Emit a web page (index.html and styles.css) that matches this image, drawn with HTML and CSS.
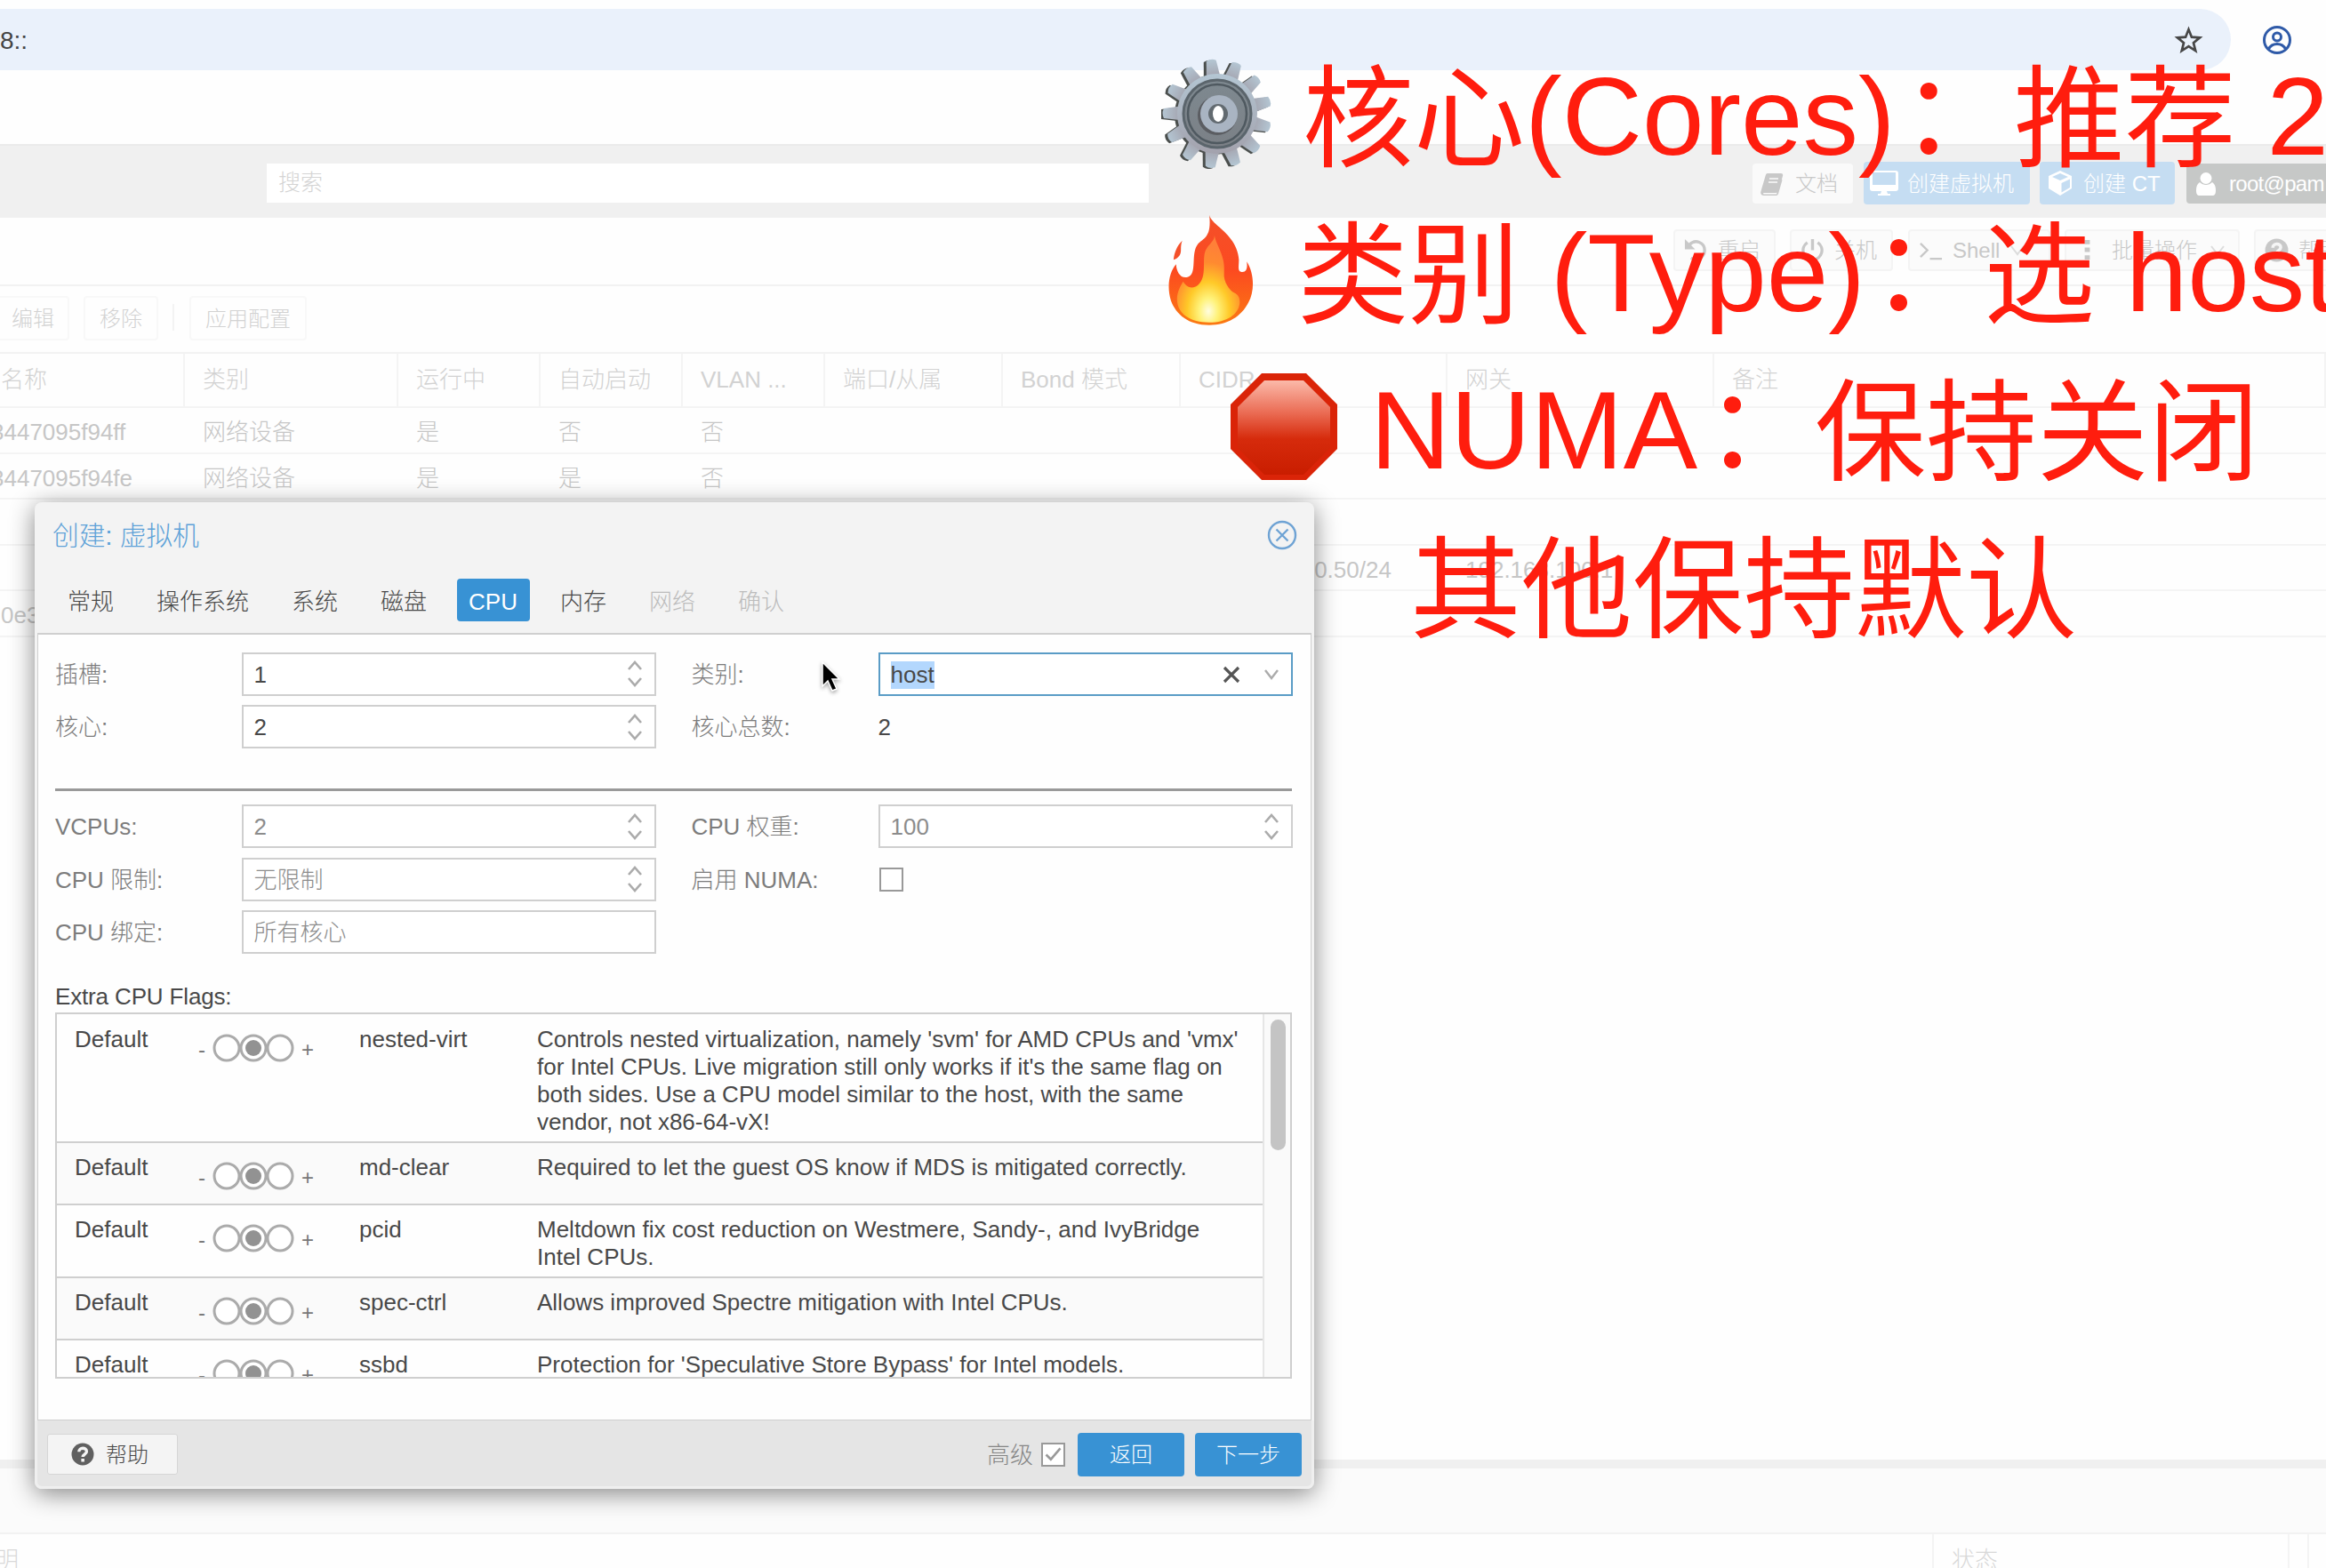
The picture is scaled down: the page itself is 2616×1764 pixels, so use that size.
FILE: index.html
```html
<!DOCTYPE html>
<html lang="zh-CN">
<head>
  <meta charset="UTF-8">
  <title>创建: 虚拟机</title>
  <link rel="stylesheet" href="styles.css">
</head>
<body>

  <!-- shared icons -->
  <svg class="defs">
    <symbol id="spin" viewBox="0 0 18 32"><path d="M2 11l7-8 7 8M2 21l7 8 7-8"/></symbol>
    <symbol id="down" viewBox="0 0 18 14"><path d="M2 2l7 9 7-9"/></symbol>
    <symbol id="help" viewBox="0 0 26 26">
      <circle cx="13" cy="13" r="12.5" fill="currentColor"/>
      <path d="M8.8 10.3c0-5.4 8.6-5.3 8.6-.4 0 3.3-4.3 3.1-4.3 6.2" fill="none" stroke="#f5f5f5" stroke-width="3.4"/>
      <rect x="11.4" y="18" width="3.5" height="3.5" fill="#f5f5f5"/>
    </symbol>
    <symbol id="tri" viewBox="0 0 92 32">
      <circle cx="16" cy="16" r="14"/><circle cx="46" cy="16" r="14"/><circle cx="76" cy="16" r="14"/>
      <circle class="dot" cx="46" cy="16" r="9"/>
    </symbol>
  </svg>

  <div class="page">
    <div class="browser">
      <div class="address">
        <span>8::</span>
        <svg class="star" viewBox="0 0 32 32"><path d="M16 4l3.3 8.3 8.9.6-6.9 5.7 2.2 8.7-7.5-4.8-7.5 4.8 2.2-8.7-6.9-5.7 8.9-.6z"/></svg>
      </div>
      <svg class="profile" viewBox="0 0 34 34"><circle cx="17" cy="17" r="14.5"/><circle cx="17" cy="13.5" r="4.5"/><path d="M7.5 27c4-7.5 15-7.5 19 0"/></svg>
    </div>

    <div class="header">
      <div class="search">搜索</div>
      <div class="header-buttons">
        <div class="btn docs">
          <svg viewBox="0 0 26 26"><path fill="currentColor" d="M8 1h15c2 0 2.500 1.500 2 3l-4.500 16c-.5 2-1.500 3-3.500 3H4c-1.500 0-1.500 1.500 0 1.500h14l5-17 1.500 1L20 24c-.5 1.500-1.500 2-3 2H4c-3 0-4.500-2-3.500-5L5.500 4C6 2 6.500 1 8 1z"/><path stroke="#fafafa" stroke-width="1.600" d="M10 7h10M9 11h10"/></svg>
          文档
        </div>
        <div class="btn blue vm">
          <svg viewBox="0 0 32 28"><path fill="#fff" fill-rule="evenodd" d="M3 0h26c2 0 3 1 3 3v17c0 2-1 3-3 3H19l1 3h3v2H9v-2h3l1-3H3c-2 0-3-1-3-3V3c0-2 1-3 3-3zm0 2v14h26V2z"/></svg>
          创建虚拟机
        </div>
        <div class="btn blue ct">
          <svg viewBox="0 0 28 28"><path fill="#fff" fill-rule="evenodd" d="M14 0l13 6v14L14 28 1 20V6zM14 3L5 7l9 4 9-4zM15.500 14v10.500L25 19V9.500z"/></svg>
          <span>创建 CT</span>
        </div>
        <div class="btn dark">
          <svg viewBox="0 0 22 26"><circle cx="11" cy="6.500" r="6.500" fill="#fff"/><path fill="#fff" d="M4 11c4 4 10 4 14 0 3 2 4 5 4 9 0 4-1 6-4 6H4c-3 0-4-2-4-6 0-4 1-7 4-9z"/></svg>
          root@pam
        </div>
      </div>
    </div>

    <div class="node-bar">
      <div class="btn restart">
        <svg viewBox="0 0 28 28"><path fill="none" stroke="currentColor" stroke-width="3.500" d="M6 8c7-8 18-3 18 6 0 8-8 13-16 9"/><path fill="currentColor" d="M1 1v12h12z"/></svg>
        重启
      </div>
      <div class="btn power">
        <svg viewBox="0 0 28 28"><path fill="none" stroke="currentColor" stroke-width="3.500" d="M8 5c-9 6-5 20 6 20s15-14 6-20M14 1v13"/></svg>
        关机
      </div>
      <div class="btn shell">
        <svg viewBox="0 0 28 28"><path fill="none" stroke="currentColor" stroke-width="2.500" d="M2 6l8 8-8 8M13 24h14"/></svg>
        Shell
        <svg class="caret"><use href="#down"/></svg>
      </div>
      <div class="btn bulk">
        <svg viewBox="0 0 28 28"><path fill="currentColor" d="M11 2h6v5h-6zM11 11h6v5h-6zM11 20h6v5h-6z"/></svg>
        批量操作
        <svg class="caret"><use href="#down"/></svg>
      </div>
      <div class="btn node-help">
        <svg><use href="#help"/></svg>
        帮助
      </div>
    </div>

    <div class="net-bar">
      <div class="btn edit">编辑</div>
      <div class="btn remove">移除</div>
      <div class="sep"></div>
      <div class="btn apply">应用配置</div>
    </div>

    <div class="net-table">
      <div class="net-row net-head">
        <span>名称</span><span>类别</span><span>运行中</span><span>自动启动</span><span>VLAN ...</span><span>端口/从属</span><span>Bond 模式</span><span>CIDR</span><span>网关</span><span>备注</span>
      </div>
      <div class="net-row"><span class="cut">3447095f94ff</span><span>网络设备</span><span>是</span><span>否</span><span>否</span></div>
      <div class="net-row"><span class="cut">3447095f94fe</span><span>网络设备</span><span>是</span><span>是</span><span>否</span></div>
      <div class="net-row"></div>
      <div class="net-row"><span></span><span></span><span></span><span></span><span></span><span></span><span></span><span>192.168.100.50/24</span><span>192.168.100.1</span></div>
      <div class="net-row"><span>0e3</span></div>
    </div>

    <div class="splitter"></div>
    <div class="log-tabs"></div>
    <div class="log-head">
      <span class="desc">明</span>
      <span class="status">状态</span>
      <span></span>
    </div>
  </div>

  <div class="dialog">
    <div class="dialog-title">
      <span>创建: 虚拟机</span>
      <svg viewBox="0 0 34 34"><circle cx="17" cy="17" r="15"/><path d="M10.500 10.500l13 13M23.500 10.500l-13 13"/></svg>
    </div>
    <div class="tabs">
      <span>常规</span>
      <span>操作系统</span>
      <span>系统</span>
      <span>磁盘</span>
      <span class="active">CPU</span>
      <span>内存</span>
      <span class="off">网络</span>
      <span class="off">确认</span>
    </div>

    <div class="dialog-body">
      <div class="form">
        <label>插槽:</label>
        <div class="field">1<svg class="spin"><use href="#spin"/></svg></div>
        <label class="right">类别:</label>
        <div class="field focus"><mark>host</mark>
          <svg class="clear" viewBox="0 0 20 20"><path d="M2 2l16 16M18 2L2 18"/></svg>
          <svg class="caret"><use href="#down"/></svg>
        </div>

        <label>核心:</label>
        <div class="field">2<svg class="spin"><use href="#spin"/></svg></div>
        <label class="right">核心总数:</label>
        <div class="plain">2</div>
      </div>

      <div class="rule"></div>

      <div class="form">
        <label>VCPUs:</label>
        <div class="field empty">2<svg class="spin"><use href="#spin"/></svg></div>
        <label class="right">CPU 权重:</label>
        <div class="field empty">100<svg class="spin"><use href="#spin"/></svg></div>

        <label>CPU 限制:</label>
        <div class="field empty">无限制<svg class="spin"><use href="#spin"/></svg></div>
        <label class="right">启用 NUMA:</label>
        <div class="plain"><div class="check"></div></div>

        <label>CPU 绑定:</label>
        <div class="field empty">所有核心</div>
      </div>

      <div class="flags-label">Extra CPU Flags:</div>
      <div class="flags">
        <div class="flag-list">
          <div class="flag tall">
            <span>Default</span>
            <span class="tri"><i>-</i><svg><use href="#tri"/></svg><i>+</i></span>
            <span>nested-virt</span>
            <span>Controls nested virtualization, namely 'svm' for AMD CPUs and 'vmx' for Intel CPUs. Live migration still only works if it's the same flag on both sides. Use a CPU model similar to the host, with the same vendor, not x86-64-vX!</span>
          </div>
          <div class="flag">
            <span>Default</span>
            <span class="tri"><i>-</i><svg><use href="#tri"/></svg><i>+</i></span>
            <span>md-clear</span>
            <span>Required to let the guest OS know if MDS is mitigated correctly.</span>
          </div>
          <div class="flag two">
            <span>Default</span>
            <span class="tri"><i>-</i><svg><use href="#tri"/></svg><i>+</i></span>
            <span>pcid</span>
            <span>Meltdown fix cost reduction on Westmere, Sandy-, and IvyBridge Intel CPUs.</span>
          </div>
          <div class="flag">
            <span>Default</span>
            <span class="tri"><i>-</i><svg><use href="#tri"/></svg><i>+</i></span>
            <span>spec-ctrl</span>
            <span>Allows improved Spectre mitigation with Intel CPUs.</span>
          </div>
          <div class="flag">
            <span>Default</span>
            <span class="tri"><i>-</i><svg><use href="#tri"/></svg><i>+</i></span>
            <span>ssbd</span>
            <span>Protection for 'Speculative Store Bypass' for Intel models.</span>
          </div>
        </div>
        <div class="scroll"><div class="thumb"></div></div>
      </div>
    </div>

    <div class="dialog-foot">
      <div class="help-btn"><svg><use href="#help"/></svg>帮助</div>
      <span class="adv">高级</span>
      <div class="check"><svg viewBox="0 0 26 26"><path d="M4 13l6 6L22 5"/></svg></div>
      <div class="primary">返回</div>
      <div class="primary">下一步</div>
    </div>
  </div>

  <svg class="cursor" viewBox="0 0 24 36"><path d="M2 1v27l6-6 5 11 5-2-5-11h8z"/></svg>

  <!-- captions on top of the recording -->
  <div class="caption c1">
    <svg viewBox="-62 -62 124 124">
      <defs>
        <linearGradient id="steel" x1="0" y1="0" x2="0" y2="1"><stop offset="0" stop-color="#b4c6d3"/><stop offset="1" stop-color="#a3a2ad"/></linearGradient>
        <linearGradient id="disc" x1="0" y1="0" x2="0" y2="1"><stop offset="0" stop-color="#7e8990"/><stop offset="1" stop-color="#7b8086"/></linearGradient>
        <path id="tooth" d="M-8-40l2-20q6-3 11 0l3 20z"/>
        <g id="teeth">
          <use href="#tooth" transform="rotate(-6)"/><use href="#tooth" transform="rotate(21.700)"/><use href="#tooth" transform="rotate(49.400)"/>
          <use href="#tooth" transform="rotate(77.100)"/><use href="#tooth" transform="rotate(104.800)"/><use href="#tooth" transform="rotate(132.500)"/>
          <use href="#tooth" transform="rotate(160.200)"/><use href="#tooth" transform="rotate(187.900)"/><use href="#tooth" transform="rotate(215.600)"/>
          <use href="#tooth" transform="rotate(243.300)"/><use href="#tooth" transform="rotate(271)"/><use href="#tooth" transform="rotate(298.700)"/>
          <use href="#tooth" transform="rotate(326.400)"/><circle r="45"/>
        </g>
      </defs>
      <use href="#teeth" fill="#4b4f4d" transform="translate(-2 1)"/>
      <use href="#teeth" fill="url(#steel)" transform="translate(1 0)"/>
      <circle cx="1" r="38" fill="url(#disc)" stroke="#5b656c" stroke-width="3"/>
      <circle cx="1" r="33" fill="none" stroke="#4f5960" stroke-width="2.500"/>
      <circle cx="1" cy="2" r="22" fill="#5b5d62"/>
      <circle cx="3" r="21" fill="#a9b4c2"/>
      <circle cx="2" r="11" fill="#626a70"/>
      <ellipse cx="2" rx="6" ry="9" fill="#fff"/>
    </svg>
    <span>核心<span class="latin">(Cores)</span></span><span class="colon">：</span><span>推荐 <span class="latin">2</span></span>
  </div>
  <div class="caption c2">
    <svg viewBox="0 0 100 128">
      <defs>
        <linearGradient id="fire" x1="0" y1="0" x2="0" y2="1"><stop offset="0" stop-color="#f4502a"/><stop offset=".5" stop-color="#fc4a20"/><stop offset="1" stop-color="#fb7a12"/></linearGradient>
        <radialGradient id="glow" cx=".5" cy=".87" r=".75"><stop offset="0" stop-color="#fffde0"/><stop offset=".2" stop-color="#fff27a"/><stop offset=".45" stop-color="#ffc928"/><stop offset=".75" stop-color="#ff8a30"/><stop offset="1" stop-color="#ff8038"/></radialGradient>
      </defs>
      <path fill="url(#fire)" d="M48 0c1 12 32 22 34 52 0 8-2 14 4 14 5 0 6-5 5-12 9 14 9 34 2 47-8 16-24 26-45 26-24 0-38-12-44-28C-1 82 2 66 10 57c0 8 5 17 13 15 12-3 3-27 12-38 6-7 16-7 13-34z"/>
      <path fill="#f4502a" d="M17 30c-3 8 0 12-3 17-2 3-4 4-7 5 1-9 4-16 10-22z"/>
      <path fill="url(#glow)" d="M54 24c2 12 13 24 11 43-1 10 6 20 12 23 4 2 6 5 6 11-1 14-15 23-35 23-22 0-37-10-37-27 0-8 4-15 7-20 4 7 11 9 17 4 12-10 3-32 10-42 4-6 9-9 9-15z"/>
    </svg>
    <span>类别 <span class="latin">(Type)</span></span><span class="colon">：</span><span>选 <span class="latin">host</span></span>
  </div>
  <div class="caption c3">
    <svg viewBox="0 0 120 120">
      <defs><linearGradient id="stop" x1="0" y1="0" x2="0" y2="1"><stop offset="0" stop-color="#fbb9a9"/><stop offset=".35" stop-color="#ea6a52"/><stop offset=".62" stop-color="#d62b0c"/><stop offset="1" stop-color="#c91d00"/></linearGradient></defs>
      <path fill="#da2408" d="M35 0h50l35 35v50l-35 35H35L0 85V35z"/>
      <path fill="url(#stop)" d="M38 8h44l30 30v46l-30 30H38L8 84V38z"/>
    </svg>
    <span><span class="latin">NUMA</span></span><span class="colon">：</span><span>保持关闭</span>
  </div>
  <div class="caption c4"><span>其他保持默认</span></div>

</body>
</html>
```

FILE: styles.css
```css
* {
  box-sizing: border-box;
}

body {
  margin: 0;
  position: relative;
  width: 2616px;
  height: 1764px;
  overflow: hidden;
  background: #fefefe;
  font-family: "Liberation Sans", "Noto Sans CJK SC", sans-serif;
  font-weight: 300;
  font-size: 26px;
  line-height: 31px;
  color: #484848;
}

.defs {
  display: none;
}

svg {
  flex: none;
  display: block;
}

/* faded page behind the dialog */

.page {
  display: flex;
  flex-direction: column;
  height: 1764px;
}

.browser {
  display: flex;
  height: 162px;
  padding-top: 10px;
}

.address {
  display: flex;
  justify-content: space-between;
  align-items: center;
  width: 2509px;
  height: 69px;
  padding: 2px 31px 0 0;
  background: #eaf1fb;
  border-radius: 0 35px 35px 0;
  font-size: 28px;
  color: #444;
}

.star {
  width: 33px;
  height: 33px;
  fill: none;
  stroke: #474747;
  stroke-width: 2.6;
}

.profile {
  width: 34px;
  height: 34px;
  margin: 18px 0 0 35px;
  fill: none;
  stroke: #2f5aa8;
  stroke-width: 3;
}

.header {
  display: flex;
  height: 83px;
  background: #f0f0f0;
  border-top: 2px solid #ebebeb;
}

.search {
  flex: none;
  width: 992px;
  height: 44px;
  margin: 20px 0 0 300px;
  padding: 6px 13px;
  background: #fff;
  font-size: 25px;
  color: #d4d4d4;
}

.header-buttons {
  display: flex;
  flex: none;
  margin: 17px 0 0 679px;
  white-space: nowrap;
}

.btn {
  display: flex;
  align-items: center;
  flex: none;
  font-size: 24px;
  color: #c8c8c8;
  border-radius: 4px;
  white-space: nowrap;
}

.docs {
  width: 113px;
  height: 45px;
  margin: 3px 12px 0 0;
  padding-left: 9px;
  gap: 13px;
  background: #fafafa;
}

.docs svg {
  width: 26px;
  height: 26px;
}

.blue {
  height: 48px;
  margin-top: 1px;
  background: #c5ddf2;
  color: #fff;
}

.vm {
  width: 187px;
  padding-left: 7px;
  gap: 10px;
  margin-right: 11px;
}

.vm svg {
  width: 32px;
  height: 28px;
}

.ct {
  width: 152px;
  padding-left: 9px;
  gap: 12px;
  margin-right: 13px;
}

.ct svg {
  width: 28px;
  height: 28px;
}

.dark {
  width: 170px;
  height: 45px;
  margin-top: 3px;
  padding-left: 11px;
  gap: 15px;
  background: #c6c8c7;
  color: #fff;
  letter-spacing: -0.7px;
}

.dark svg {
  width: 22px;
  height: 26px;
}

.node-bar {
  display: flex;
  height: 77px;
  padding: 13px 0 0 1882px;
  border-bottom: 2px solid #f2f2f2;
}

.node-bar .btn {
  height: 47px;
  padding-left: 10px;
  gap: 11px;
  background: #fbfbfb;
  border: 2px solid #f4f4f4;
}

.node-bar svg {
  width: 27px;
  height: 27px;
}

.node-bar .caret {
  width: 18px;
  height: 14px;
  fill: none;
  stroke: #dcdcdc;
  stroke-width: 2;
}

.restart { width: 115px; margin-right: 16px; }
.power { width: 116px; margin-right: 17px; }
.shell { width: 160px; margin-right: 16px; }
.node-bar .bulk { width: 197px; margin-right: 16px; gap: 14px; }
.node-help { width: 120px; }

.net-bar {
  display: flex;
  height: 74px;
  padding-top: 11px;
}

.net-bar .btn {
  justify-content: center;
  height: 50px;
  border: 2px solid #f8f8f8;
  color: #d2d2d2;
}

.edit { width: 82px; margin-left: -4px; }
.remove { width: 84px; margin-left: 16px; }
.apply { width: 132px; margin-left: 17px; }

.sep {
  width: 2px;
  height: 30px;
  margin: 9px 0 0 16px;
  background: #f3f3f3;
}

.net-table {
  flex: 1;
}

.net-row {
  display: grid;
  grid-template-columns: 208px 240px 160px 160px 160px 200px 200px 300px 300px 1fr;
  height: 51.6px;
  border-bottom: 2px solid #f4f4f4;
  color: #c6c6c6;
}

.net-row span {
  padding: 12px 0 0 20px;
  white-space: nowrap;
}

.net-row span:first-child {
  padding-left: 1px;
}

.net-row .cut {
  margin-left: -11px;
}

.net-head {
  height: 63px;
  border-top: 2px solid #f2f2f2;
  color: #d2d2d2;
}

.net-head span {
  padding-top: 14px;
  border-right: 2px solid #f4f4f4;
}

.splitter {
  height: 10px;
  background: #f0f0f0;
}

.log-tabs {
  height: 74px;
  background: #fbfbfb;
  border-bottom: 2px solid #f2f2f2;
}

.log-head {
  display: flex;
  height: 38px;
  overflow: hidden;
  color: #d8d8d8;
}

.log-head span {
  padding: 14px 0 0 20px;
  border-right: 2px solid #f4f4f4;
}

.log-head .desc {
  width: 2175px;
  padding-left: 0;
  text-indent: -5px;
}

.log-head .status {
  width: 400px;
}

/* dialog */

.dialog {
  position: absolute;
  left: 39px;
  top: 565px;
  width: 1439px;
  height: 1110px;
  padding: 0 3px;
  border-radius: 8px;
  background: #f3f3f3;
  box-shadow: 0 5px 28px rgba(0, 0, 0, 0.48);
}

.dialog-title {
  display: flex;
  justify-content: space-between;
  align-items: center;
  height: 72px;
  padding: 2px 16px 0 17px;
  font-size: 29.7px;
  color: #5ea2d8;
}

.dialog-title svg {
  width: 34px;
  height: 34px;
  fill: none;
  stroke: #6fa3d4;
  stroke-width: 2.4;
}

.tabs {
  display: flex;
  gap: 20px;
  height: 75px;
  padding: 14px 0 0 20px;
}

.tabs span {
  height: 48px;
  padding: 11px 14px 7px;
  border-radius: 4px;
}

.tabs .active {
  width: 82px;
  padding: 11px 13px 7px;
  background: #3892d4;
  color: #fff;
}

.tabs .off {
  color: #bcbcbc;
}

.dialog-body {
  height: 886px;
  padding: 19px 21px 0 19px;
  background: #fefefe;
  border: 1px solid #cfcfcf;
  border-top-width: 2px;
}

.form {
  display: grid;
  grid-template-columns: 209.500px 466px 250px 466px;
  grid-auto-rows: 50px;
  row-gap: 9.500px;
  align-items: center;
}

label {
  padding-top: 2px;
  color: #7c7c7c;
}

label.right {
  padding-left: 40px;
}

.field {
  display: flex;
  align-items: center;
  height: 49px;
  padding: 2px 13px 0 12px;
  border: 2px solid #cfcfcf;
  background: #fff;
}

.field.empty {
  color: #8c8c8c;
}

.field.focus {
  border-color: #5a9cc6;
}

.plain {
  padding-top: 2px;
}

.spin {
  width: 18px;
  height: 32px;
  margin: -2px 0 0 auto;
  fill: none;
  stroke: #ababab;
  stroke-width: 2.6;
}

.clear {
  width: 20px;
  height: 20px;
  margin: 0 26px 0 auto;
  stroke: #555;
  stroke-width: 3.2;
}

.field .caret {
  width: 18px;
  height: 14px;
  fill: none;
  stroke: #ababab;
  stroke-width: 2.4;
}

mark {
  background: #b3d7fd;
  color: #484848;
}

.check {
  width: 27px;
  height: 27px;
  border: 2px solid #999;
  background: #fff;
}

.plain .check {
  margin: -2px 0 0 1px;
}

.rule {
  height: 3px;
  margin: 44px 0 15px;
  background: #999;
}

.flags-label {
  margin-top: 32px;
  letter-spacing: -0.15px;
}

.flags {
  display: flex;
  height: 412px;
  margin-top: 2px;
  border: 2px solid #cfcfcf;
  overflow: hidden;
}

.flag-list {
  flex: 1;
}

.flag {
  display: grid;
  grid-template-columns: 139px 181px 200px 800px;
  height: 70px;
  padding: 12px 0 0 20px;
  border-bottom: 2px solid #cfcfcf;
}

.flag:nth-child(even) {
  background: #fafafa;
}

.flag.tall {
  height: 145px;
  padding-top: 13px;
}

.flag.two {
  height: 82px;
}

.tri {
  display: flex;
  align-items: center;
  height: 32px;
  margin-top: 9px;
  gap: 8px;
}

.tri svg {
  width: 92px;
  height: 32px;
  fill: #fff;
  stroke: #ababab;
  stroke-width: 3;
}

.tri i {
  padding-top: 4px;
  font-style: normal;
  font-size: 24px;
  color: #777;
}

.dot {
  fill: #929292;
  stroke: none;
}

.scroll {
  width: 31px;
  padding: 6px 0 0 7px;
  background: #fafafa;
  border-left: 2px solid #e6e6e6;
}

.thumb {
  width: 17px;
  height: 147px;
  border-radius: 9px;
  background: #c4c4c4;
}

.dialog-foot {
  display: flex;
  align-items: center;
  height: 77px;
  margin: 0 -3px;
  padding: 2px 14px 0 15px;
  border: solid #efefef;
  border-width: 0 3px 3px;
  border-radius: 0 0 8px 8px;
  background: #e5e5e5;
}

.help-btn {
  display: flex;
  align-items: center;
  gap: 13px;
  width: 147px;
  height: 46px;
  margin-left: -4px;
  padding-left: 26px;
  border: 1px solid #d6d6d6;
  border-radius: 3px;
  background: #f4f4f4;
  font-size: 24px;
}

.help-btn svg {
  width: 26px;
  height: 26px;
  color: #606060;
}

.adv {
  margin: 2px 9px 0 auto;
  color: #858585;
}

.dialog-foot .check svg {
  width: 23px;
  height: 23px;
  fill: none;
  stroke: #999;
  stroke-width: 3;
}

.primary {
  width: 120px;
  height: 49px;
  margin-left: 12px;
  border-radius: 4px;
  background: #3892d4;
  color: #fff;
  font-size: 24px;
  line-height: 49px;
  text-align: center;
}

.check + .primary {
  margin-left: 14px;
}

.dialog-foot .primary:last-child {
  margin-right: -3px;
}

.cursor {
  position: absolute;
  left: 923px;
  top: 744px;
  width: 24px;
  height: 36px;
  stroke: #fff;
  stroke-width: 1.5;
  filter: drop-shadow(0 2px 2px rgba(0, 0, 0, 0.35));
}

/* captions */

.caption {
  position: absolute;
  display: flex;
  font-size: 125px;
  line-height: 176px;
  font-weight: 400;
  color: #ff1d0e;
  white-space: nowrap;
}

.caption .latin {
  line-height: 1;
  vertical-align: 4px;
}

.caption .colon {
  width: 158px;
  margin: -9px 0 0 -25px;
  font-family: "Noto Sans CJK TC", sans-serif;
}

.c1 { left: 1306px; top: 47px; }
.c2 { left: 1313px; top: 223px; }
.c3 { left: 1384px; top: 400px; }
.c4 { left: 1586px; top: 577px; }

.c1 svg { width: 124px; height: 124px; margin: 19px 35px 0 0; }
.c2 svg { width: 98px; height: 126px; margin: 18px 48px 0 0; }
.c3 svg { width: 120px; height: 120px; margin: 20px 37px 0 0; }

.caption.c3 .colon {
  width: 155px;
  margin-left: -23px;
}
```
